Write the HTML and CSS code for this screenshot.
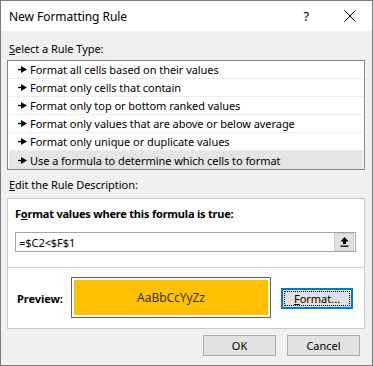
FILE: index.html
```html
<!DOCTYPE html>
<html lang="en">
<head>
  <meta charset="UTF-8" />
  <title>New Formatting Rule</title>
  <link rel="stylesheet" href="styles.css">
</head>
<body>
  <div class="dialog">
    <div class="titlebar">
      <span class="title">New Formatting Rule</span>
      <span class="help">?</span>
      <span class="close">
        <svg width="12" height="12" viewBox="0 0 12 12"><path d="M0.5 0.5 L11.5 11.5 M11.5 0.5 L0.5 11.5" stroke="#000" stroke-width="1"/></svg>
      </span>
    </div>

    <div class="content">
      <div class="label"><u>S</u>elect a Rule Type:</div>

      <ul class="rule-list">
        <li><svg class="arrow" width="9" height="7" viewBox="0 0 9 7"><path d="M0 3.5 H4" stroke="#000" stroke-width="1.3"/><path d="M3 0 L9 3.5 L3 7 Z" fill="#000"/></svg>Format all cells based on their values</li>
        <li><svg class="arrow" width="9" height="7" viewBox="0 0 9 7"><path d="M0 3.5 H4" stroke="#000" stroke-width="1.3"/><path d="M3 0 L9 3.5 L3 7 Z" fill="#000"/></svg>Format only cells that contain</li>
        <li><svg class="arrow" width="9" height="7" viewBox="0 0 9 7"><path d="M0 3.5 H4" stroke="#000" stroke-width="1.3"/><path d="M3 0 L9 3.5 L3 7 Z" fill="#000"/></svg>Format only top or bottom ranked values</li>
        <li><svg class="arrow" width="9" height="7" viewBox="0 0 9 7"><path d="M0 3.5 H4" stroke="#000" stroke-width="1.3"/><path d="M3 0 L9 3.5 L3 7 Z" fill="#000"/></svg>Format only values that are above or below average</li>
        <li><svg class="arrow" width="9" height="7" viewBox="0 0 9 7"><path d="M0 3.5 H4" stroke="#000" stroke-width="1.3"/><path d="M3 0 L9 3.5 L3 7 Z" fill="#000"/></svg>Format only unique or duplicate values</li>
        <li class="selected"><svg class="arrow" width="9" height="7" viewBox="0 0 9 7"><path d="M0 3.5 H4" stroke="#000" stroke-width="1.3"/><path d="M3 0 L9 3.5 L3 7 Z" fill="#000"/></svg>Use a formula to determine which cells to format</li>
      </ul>

      <div class="label label-edit"><u>E</u>dit the Rule Description:</div>

      <div class="desc">
        <div class="desc-top">
          <div class="desc-title">F<u>o</u>rmat values where this formula is true:</div>
          <div class="formula">
            <span class="formula-text">=$C2&lt;$F$1</span>
            <span class="collapse">
              <svg width="9" height="10" viewBox="0 0 9 10"><path d="M4.5 0 L8.5 4.5 L6 4.5 L6 7 L3 7 L3 4.5 L0.5 4.5 Z" fill="#000"/><rect x="0.5" y="8.5" width="8" height="1.3" fill="#000"/></svg>
            </span>
          </div>
        </div>

        <div class="preview-row">
          <span class="preview-label">Preview:</span>
          <div class="preview-box">
            <div class="preview-fill">AaBbCcYyZz</div>
          </div>
          <button class="btn btn-focus"><span class="focus-ring"><u>F</u>ormat...</span></button>
        </div>
      </div>

      <div class="actions">
        <button class="btn">OK</button>
        <button class="btn">Cancel</button>
      </div>
    </div>
  </div>
</body>
</html>
```

FILE: styles.css
```css
body {
  margin: 0;
  font-family: 'Noto Sans', 'Open Sans', sans-serif;
  font-size: 11px;
  letter-spacing: -0.05px;
  color: #000;
}
.dialog {
  width: 373px;
  height: 366px;
  box-sizing: border-box;
  border: 1px solid #7a7a7a;
  background: #f0f0f0;
}
.titlebar {
  display: flex;
  align-items: center;
  height: 30px;
  background: #fff;
  padding-left: 8px;
}
.title {
  flex: 1;
  font-size: 12px;
}
.help {
  font-size: 13px;
  margin-right: 35px;
}
.close {
  display: flex;
  margin-right: 16px;
}
.content {
  padding: 0 7px 0 6px;
}
.label {
  line-height: 16px;
  padding-left: 2px;
}
.label:first-child {
  margin-top: 10px;
  margin-bottom: 3px;
}
.label-edit {
  margin-top: 7px;
  margin-bottom: 5px;
}
.rule-list {
  list-style: none;
  margin: 0;
  padding: 0;
  background: #fff;
  border: 1px solid #828790;
}
.rule-list li {
  display: flex;
  align-items: center;
  height: 17px;
  margin: 0 1px;
  padding-left: 9px;
  border-bottom: 1px solid #ececec;
}
.rule-list li:last-child {
  border-bottom: none;
  height: 18px;
}
.rule-list li.selected {
  background: #e5e5e5;
}
.arrow {
  margin-right: 3px;
}
.desc {
  background: #fff;
  border: 1px solid #c8c8c8;
  height: 131px;
  box-sizing: border-box;
}
.desc-top {
  padding: 7px 8px 0 7px;
  height: 69px;
  box-sizing: border-box;
  border-bottom: 1px solid #d0d0d0;
}
.desc-title {
  font-weight: bold;
  letter-spacing: -0.2px;
  line-height: 16px;
  margin-bottom: 10px;
}
.formula {
  display: flex;
  align-items: center;
  height: 20px;
  box-sizing: border-box;
  border: 1px solid #a5a5a5;
  padding-left: 3px;
}
.formula-text {
  flex: 1;
}
.collapse {
  display: flex;
  align-items: center;
  justify-content: center;
  width: 20px;
  height: 18px;
  box-sizing: border-box;
  background: #e1e1e1;
  border: 1px solid #cfcfcf;
  margin-right: 1px;
}
.preview-row {
  display: flex;
  align-items: center;
  height: 61px;
  padding-left: 9px;
}
.preview-label {
  font-weight: bold;
  width: 54px;
}
.preview-box {
  width: 200px;
  height: 41px;
  box-sizing: border-box;
  border: 1px solid #646464;
  padding: 2px;
  background: #fff;
  margin-right: 10px;
  margin-top: -3px;
}
.preview-fill {
  height: 100%;
  background: #ffc000;
  display: flex;
  align-items: center;
  justify-content: center;
  color: #333;
  font-size: 12px;
}
.btn {
  font-family: inherit;
  font-size: 11px;
  width: 73px;
  height: 21px;
  padding: 0;
  background: #e1e1e1;
  border: 1px solid #adadad;
  color: #000;
}
.btn-focus {
  width: 72px;
  border: 2px solid #0078d7;
  display: flex;
  padding: 1px;
}
.focus-ring {
  flex: 1;
  display: flex;
  align-items: center;
  justify-content: center;
  border: 1px dotted #000;
}
.actions {
  display: flex;
  justify-content: flex-end;
  gap: 11px;
  margin-top: 6px;
  padding-right: 5px;
}
```
